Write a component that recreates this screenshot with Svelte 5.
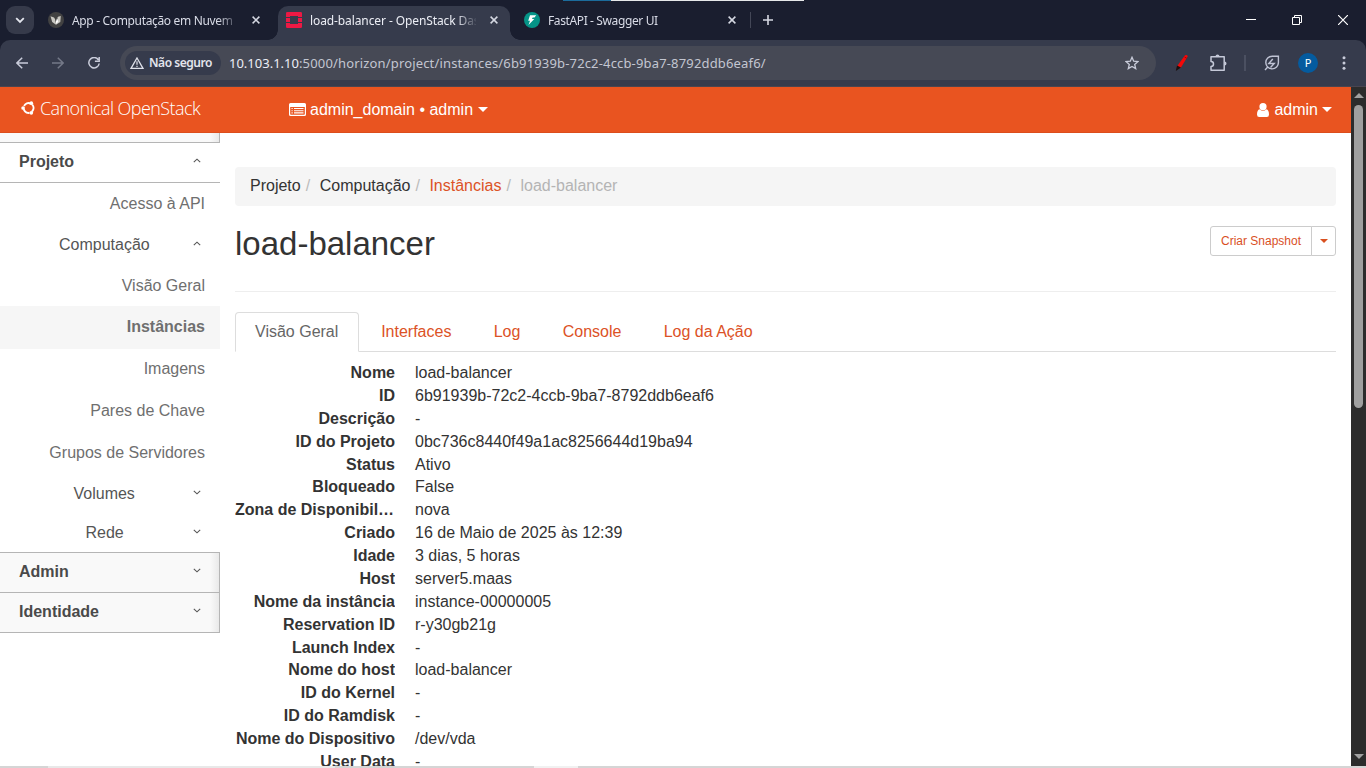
<script>
  const details = [
    ['Nome', 'load-balancer'],
    ['ID', '6b91939b-72c2-4ccb-9ba7-8792ddb6eaf6'],
    ['Descrição', '-'],
    ['ID do Projeto', '0bc736c8440f49a1ac8256644d19ba94'],
    ['Status', 'Ativo'],
    ['Bloqueado', 'False'],
    ['Zona de Disponibilidade', 'nova'],
    ['Criado', '16 de Maio de 2025 às 12:39'],
    ['Idade', '3 dias, 5 horas'],
    ['Host', 'server5.maas'],
    ['Nome da instância', 'instance-00000005'],
    ['Reservation ID', 'r-y30gb21g'],
    ['Launch Index', '-'],
    ['Nome do host', 'load-balancer'],
    ['ID do Kernel', '-'],
    ['ID do Ramdisk', '-'],
    ['Nome do Dispositivo', '/dev/vda'],
    ['User Data', '-']
  ];
  const tabs = ['Visão Geral', 'Interfaces', 'Log', 'Console', 'Log da Ação'];
</script>

{#snippet chevron(up)}
  <svg class="chev" width="8" height="5" viewBox="0 0 8 5"><path d={up ? 'M.8 4.2 4 1.2l3.2 3' : 'M.8.8 4 3.8l3.2-3'} fill="none" stroke="#555" stroke-width="1.1" /></svg>
{/snippet}

{#snippet close()}
  <svg class="close" width="8" height="8" viewBox="0 0 8 8"><path d="m.6.6 6.8 6.8M7.4.6.6 7.4" stroke="#d5d8e2" stroke-width="1.5" /></svg>
{/snippet}

<div class="screen">
  <div class="strip">
    <div class="search"><svg width="10" height="7" viewBox="0 0 10 7"><path d="m1.2 1.2 3.8 3.8 3.8-3.8" fill="none" stroke="#e4e6ee" stroke-width="1.8" /></svg></div>
    <div class="tab first">
      <svg width="16" height="16" viewBox="0 0 16 16"><circle cx="8" cy="8" r="8" fill="#424242" /><path d="M2.5 4.2 6 5.4 8 8l2-3.2 2.8-.8-.5 6L8 12.7 4.2 10Z" fill="#c9c8c2" /><path d="m6.6 5.6 1.5 5.8L10 5.6 8.1 8Z" fill="#333" /><path d="m8 9 1.3-2.4 1 3.2L8 12Z" fill="#fff" /></svg>
      <span class="tabtext t1">App - Computação em Nuvem</span>{@render close()}
    </div>
    <div class="tab active">
      <svg width="16" height="16" viewBox="0 0 16 16"><path d="M1.3 0h13.4Q16 0 16 1.3V5h-4V4H4v1H0V1.300Q0 0 1.300 0ZM0 6h4v4H0ZM12 6h4v4h-4ZM0 11h4v1h8v-1h4v3.700q0 1.300-1.300 1.300H1.300Q0 16 0 14.700Z" fill="#ed1944" /></svg>
      <span class="tabtext t2">load-balancer - OpenStack Dashboard</span>{@render close()}
    </div>
    <div class="tab third">
      <svg width="16" height="16" viewBox="0 0 16 16"><circle cx="8" cy="8" r="8" fill="#059487" /><path d="M6 3.200h6.200L10.500 5.500H8.700L8 7h2.300L4.500 13 6 8.800H4.200Z" fill="#fff" /></svg>
      <span class="tabtext t3">FastAPI - Swagger UI</span>{@render close()}
    </div>
    <i class="tabsep"></i>
    <svg class="plus" width="10" height="10" viewBox="0 0 10 10"><path d="M5 0v10M0 5h10" stroke="#d5d8e2" stroke-width="1.600" /></svg>
    <div class="window">
      <svg width="10" height="10" viewBox="0 0 10 10"><path d="M0 4.500h10" stroke="#fff" /></svg>
      <svg width="10" height="10" viewBox="0 0 10 10" fill="none" stroke="#fff"><path d="M.5 2.500h7v7h-7zM2.500 2.500v-2h7v7h-2" /></svg>
      <svg width="10" height="10" viewBox="0 0 10 10"><path d="m0 0 10 10M10 0 0 10" stroke="#fff" stroke-width="1.200" /></svg>
    </div>
    <div class="topline"></div>
  </div>

  <div class="toolbar">
    <div class="navicons">
      <svg width="12" height="12" viewBox="0 0 12 12" fill="none" stroke="#c9ccda" stroke-width="1.500"><path d="M12 6H1M6.200.700.900 6l5.300 5.300" /></svg>
      <svg width="12" height="12" viewBox="0 0 12 12" fill="none" stroke="#747988" stroke-width="1.500"><path d="M0 6h11M5.800.700 11.100 6l-5.300 5.300" /></svg>
      <svg width="12" height="12" viewBox="0 0 12 12" fill="none" stroke="#c9ccda" stroke-width="1.500"><path d="M10.300 2.700A5.200 5.200 0 1 0 11.200 6.500M11.200 0v4.300H6.900" /></svg>
    </div>
    <div class="omnibox">
      <div class="chip">
        <svg width="14" height="12" viewBox="0 0 14 12"><path d="M7 1 13 11.300H1Z" fill="none" stroke="#dfe1ea" stroke-width="1.300" /><path d="M7 4.300v3.500M7 8.700v1.300" stroke="#dfe1ea" stroke-width="1.200" /></svg>
        <b>Não seguro</b>
      </div>
      <span class="url"><em>10.103.1.10</em>:5000/horizon/project/instances/6b91939b-72c2-4ccb-9ba7-8792ddb6eaf6/</span>
      <svg class="star" width="14" height="14" viewBox="0 0 14 14"><path d="m7 1.300 1.700 3.900 4.200.400-3.200 2.800 1 4.200L7 10.400l-3.700 2.200 1-4.200L1.100 5.600l4.200-.400Z" fill="none" stroke="#c9ccda" stroke-width="1.300" /></svg>
    </div>
    <div class="exts">
      <svg width="14" height="18" viewBox="0 0 14 18"><path d="M10 1.200q2-.8 2.800 1L5.500 14.300 1.500 13Z" fill="#f40808" /><path d="m9.600 3 2.200 1.300" stroke="#a80000" /><path d="m2 11.500 4 2L.800 17Z" fill="#1c1010" /></svg>
      <svg width="18" height="18" viewBox="0 0 18 18"><path d="M2 2.800h13.200v13.400H2v-3.800a2.400 2.400 0 0 0 0-5Z" fill="none" stroke="#c5c9d8" stroke-width="1.500" stroke-linejoin="round" /><path d="M6.500 2.500a2 2 0 0 1 4 0ZM15.500 7.500a2 2 0 0 1 0 4Z" fill="#c5c9d8" /></svg>
      <i></i>
      <svg width="16" height="16" viewBox="0 0 16 16" fill="none" stroke="#bfc3d4" stroke-width="1.400"><path d="M14.400 1.300v6.200a6.300 6.300 0 1 1-6.200-6.200ZM3.300 12.500 1 15" /><path d="m8.800 4-4 4.500h5.400l-3.700 4" /></svg>
      <span class="avatar">P</span>
      <svg class="dots" width="4" height="14" viewBox="0 0 4 14" fill="#c9ccda"><circle cx="2" cy="1.700" r="1.500" /><circle cx="2" cy="7" r="1.500" /><circle cx="2" cy="12.300" r="1.500" /></svg>
    </div>
  </div>

  <div class="viewport">
    <div class="page">
      <header>
        <div class="brand">
          <svg width="14" height="14" viewBox="0 0 14 14"><circle cx="7.600" cy="7" r="4.900" fill="none" stroke="#fff" stroke-width="2" stroke-dasharray="7.260 3" transform="rotate(-42.500 7.600 7)" /><g fill="#fff"><circle cx="2.100" cy="7" r="1.850" /><circle cx="10.300" cy="2.200" r="1.850" /><circle cx="10.300" cy="11.800" r="1.850" /></g></svg>
          <span>Canonical OpenStack</span>
        </div>
        <div class="domain">
          <svg width="17" height="14" viewBox="0 0 17 14"><path fill-rule="evenodd" d="M1.500 0h14Q17 0 17 1.500v10q0 1.500-1.500 1.500h-14Q0 13 0 11.500v-10Q0 0 1.500 0ZM1.200 4v7q0 .8.700.8h13.200q.7 0 .7-.8V4Z" fill="#fff" /><path d="M2.500 5.500h1.200M2.500 7.700h1.200M2.500 9.900h1.200M5 5.500h9.500M5 7.700h9.500M5 9.900h9.500" stroke="#fff" stroke-width="1.100" /></svg>
          <span>admin_domain • admin</span><i class="caret"></i>
        </div>
        <div class="user">
          <svg width="12" height="14" viewBox="0 0 12 14" fill="#fff"><circle cx="6" cy="3.700" r="3.600" /><path d="M2.600 6.300Q6 9.300 9.400 6.300 12 7 12 11.500 12 14 9.800 14H2.200Q0 14 0 11.500 0 7 2.600 6.300Z" /></svg>
          <span>admin</span><i class="caret"></i>
        </div>
      </header>

      <div class="body">
        <nav>
          <div class="stub"></div>
          <div class="head open"><b>Projeto</b>{@render chevron(true)}</div>
          <div class="leaf h41">Acesso à API</div>
          <div class="group h41"><span class="g1">Computação</span>{@render chevron(true)}</div>
          <div class="leaf h41">Visão Geral</div>
          <div class="leaf selected">Instâncias</div>
          <div class="leaf h41 images">Imagens</div>
          <div class="leaf h42">Pares de Chave</div>
          <div class="leaf h42">Grupos de Servidores</div>
          <div class="group h40"><span class="g2">Volumes</span>{@render chevron(false)}</div>
          <div class="group h38"><span class="g3">Rede</span>{@render chevron(false)}</div>
          <div class="head"><b>Admin</b>{@render chevron(false)}</div>
          <div class="head last"><b>Identidade</b>{@render chevron(false)}</div>
        </nav>

        <main>
          <div class="crumbs"><span>Projeto</span><s>/</s><span>Computação</span><s>/</s><a href="#instances">Instâncias</a><s>/</s><span class="dim">load-balancer</span></div>
          <div class="titlebar">
            <h1>load-balancer</h1>
            <div class="actions"><button>Criar Snapshot</button><button class="drop" aria-label="Mais ações"><i class="caret"></i></button></div>
          </div>
          <div class="tabs">
            {#each tabs as tab, i}<div class:current={i === 0}>{tab}</div>{/each}
          </div>
          <dl>
            {#each details as [term, value]}<dt>{term}</dt><dd>{value}</dd>{/each}
          </dl>
        </main>
      </div>
    </div>
    <div class="scroll"><i class="up"></i><div class="thumb"></div><i class="down"></i></div>
  </div>
  <div class="bottomline"></div>
</div>

<style>
  :global(body) { margin: 0; overflow: hidden; }
  * { box-sizing: border-box; }
  svg { display: block; flex: none; }
  .screen { width: 1366px; height: 768px; position: relative; overflow: hidden; display: flex; flex-direction: column; background: #fff; font: 16px/1.42857 "Liberation Sans", Arial, sans-serif; color: #333; }
  .strip { height: 40px; flex: none; background: #1a1e2f; display: flex; align-items: center; position: relative; font: 12px/16px "Noto Sans", "Open Sans", sans-serif; color: #d9dce7; }
  .search { width: 28px; height: 28px; border-radius: 9px; background: #363a4a; margin-left: 6px; display: grid; place-items: center; }
  .tab { display: flex; align-items: center; height: 34px; margin-top: 6px; padding-bottom: 6px; }
  .first { width: 244px; padding-left: 14px; }
  .active { width: 232px; background: #363b4c; border-radius: 10px 10px 0 0; padding-left: 8px; position: relative; color: #eceef5; }
  .active::before, .active::after { content: ""; position: absolute; bottom: 0; width: 10px; height: 10px; }
  .active::before { left: -10px; background: radial-gradient(circle at 0 0, transparent 9.5px, #363b4c 10px); }
  .active::after { right: -10px; background: radial-gradient(circle at 100% 0, transparent 9.5px, #363b4c 10px); }
  .third { width: 240px; padding-left: 14px; }
  .tabtext { width: 166px; padding-top: 1px; margin: 0 14px 0 8px; overflow: hidden; white-space: nowrap; -webkit-mask: linear-gradient(90deg, #000 146px, transparent 168px); mask: linear-gradient(90deg, #000 146px, transparent 168px); }
  .t1 { letter-spacing: -.34px; }
  .t2 { letter-spacing: -.1px; }
  .t3 { letter-spacing: -.38px; }
  .tabsep { width: 1px; height: 16px; background: #434757; }
  .plus { margin-left: 12px; }
  .window { margin-left: auto; margin-right: 18px; display: flex; gap: 36px; }
  .topline { position: absolute; left: 563px; top: 0; width: 241px; height: 1px; background: linear-gradient(90deg, #1b6b9b 48px, #e6e8e9 48px); }
  .toolbar { height: 47px; flex: none; background: linear-gradient(#1a1e2f, #1a1e2f) top / 100% 12px no-repeat, #363b4c; display: flex; align-items: center; position: relative; z-index: 0; font-family: "Noto Sans", "Open Sans", sans-serif; border-bottom: 1px solid #494550; }
  .toolbar::before { content: ""; position: absolute; inset: 0; z-index: -1; border-radius: 10px 10px 0 0; background: #363b4c; }
  .navicons { display: flex; gap: 24px; padding-left: 16px; width: 120px; }
  .omnibox { width: 1036px; height: 34px; border-radius: 17px; background: #464955; display: flex; align-items: center; padding-left: 5px; }
  .chip { width: 96px; height: 24px; border-radius: 12px; background: #363b4c; display: flex; align-items: center; padding-left: 5px; gap: 5px; color: #e3e5ed; font-size: 12px; white-space: nowrap; }
  .chip b { font-weight: 600; letter-spacing: -.45px; }
  .url { margin-left: 8px; font-size: 13px; line-height: 20px; color: #c3c6d1; letter-spacing: .16px; white-space: nowrap; }
  .url em { font-style: normal; color: #eceef5; letter-spacing: 0; }
  .star { margin-left: auto; margin-right: 17px; }
  .exts { flex: 1; display: flex; align-items: center; padding-left: 19px; }
  .exts svg:nth-child(2) { margin-left: 20px; }
  .exts i { width: 2px; height: 16px; background: #4b5061; margin: 0 18px 0 17px; }
  .avatar { margin-left: 18px; width: 20px; height: 20px; border-radius: 50%; background: #045b9f; color: #fff; font-size: 11px; line-height: 20px; text-align: center; }
  .dots { margin-left: 24px; }
  .viewport { display: flex; height: 681px; }
  .page { width: 1351px; overflow: hidden; }
  header { height: 46px; background: #e95420; color: #fff; display: flex; align-items: center; border-bottom: 1px solid #dc4d1c; }
  header > div { display: flex; align-items: center; white-space: nowrap; }
  .brand { padding-left: 21px; width: 289px; gap: 5px; font: 300 18px/24px "Open Sans", Lato, sans-serif; letter-spacing: -.58px; padding-bottom: 3px; }
  .brand span { margin-top: -1px; }
  .domain span { margin: 1px 5px 0 4px; padding-top: 1px; }
  .user { margin-left: auto; margin-right: 19px; }
  .user span { margin: 1px 4px 0 5px; padding-top: 1px; }
  .caret { display: block; border: 5px solid transparent; border-top-color: currentColor; border-bottom: 0; }
  .body { display: flex; height: 635px; }
  nav { width: 220px; flex: none; line-height: 22px; color: #6f6f6f; }
  nav > div { display: flex; align-items: center; padding-right: 15px; }
  .stub, .head { border: solid #b5b5b5; border-width: 0 1px 0 0; background: linear-gradient(90deg, transparent 210px, #e9e9e9 219px), #f9f9f9; }
  .stub { height: 9px; }
  .head { height: 40px; padding-left: 19px; padding-bottom: 2px; border-top-width: 1px; justify-content: space-between; color: #4a4a4a; }
  .head.last { height: 41px; border-bottom-width: 1px; }
  .head.open { height: 41px; border-right: 0; border-bottom-width: 1px; background: #fff; }
  .head .chev, .group .chev { margin-right: 4px; margin-bottom: 3px; }
  .head:not(.open) .chev { margin-right: 3px; }
  .leaf { justify-content: flex-end; }
  .h38 { height: 38px; }
  .h40 { height: 40px; }
  .h41 { height: 41px; }
  .h42 { height: 42px; }
  .images { padding-bottom: 2px; }
  .selected { height: 43px; background: #f6f6f6; font-weight: bold; padding-bottom: 2px; }
  .group { color: #555; justify-content: space-between; }
  .g1 { margin-left: 59px; }
  .g2 { margin-left: 73.500px; }
  .g3 { margin-left: 85.500px; }
  main { width: 1101px; margin: 34px 15px 0; }
  .crumbs { height: 39px; border-radius: 4px; background: #f5f5f5; padding: 0 15px; display: flex; align-items: center; }
  .crumbs s { text-decoration: none; color: #bbb; width: 19px; padding-left: 5px; }
  .crumbs a { color: #dc5226; text-decoration: none; }
  .dim { color: #b4b4b4; }
  .titlebar { height: 86px; display: flex; justify-content: space-between; border-bottom: 1px solid #eee; }
  h1 { margin: 19px 0 0; font-weight: normal; font-size: 33px; line-height: 38px; }
  .actions { display: flex; margin-top: 20px; height: 30px; }
  button { border: 1px solid #ccc; border-radius: 3px 0 0 3px; background: #fff; color: #d9501f; padding: 0; width: 102px; font: 12px/18px "Liberation Sans", Arial, sans-serif; }
  .drop { width: 25px; margin-left: -1px; border-radius: 0 3px 3px 0; display: grid; place-items: center; }
  .drop .caret { border-width: 4px 4px 0; }
  .tabs { display: flex; height: 40px; margin-top: 20px; box-shadow: inset 0 -1px #ddd; color: #dc5226; }
  .tabs div { padding: 7px 19.150px; margin-right: 2px; border: 1px solid transparent; line-height: 23px; white-space: nowrap; }
  .tabs .current { border-color: #ddd #ddd transparent; border-radius: 4px 4px 0 0; background: #fff; color: #666; padding: 7px 19px; width: 124px; }
  dl { margin: 10px 0 0; display: grid; grid-template-columns: 160px 1fr; column-gap: 20px; }
  dt, dd { margin: 0; line-height: 22.87px; white-space: nowrap; }
  dt { font-weight: bold; text-align: right; overflow: hidden; text-overflow: ellipsis; }
  .scroll { width: 15px; background: #2c2c2c; display: flex; flex-direction: column; align-items: center; padding: 6px 0 9px; }
  .scroll i { border: 5px solid transparent; }
  .up { border-top: 0 !important; border-bottom-color: #a0a0a0 !important; }
  .down { margin-top: auto; border-bottom: 0 !important; border-top-color: #a0a0a0 !important; }
  .thumb { width: 9px; height: 303px; margin-top: 7px; border-radius: 5px; background: #9f9f9f; }
  .bottomline { position: absolute; left: 0; right: 0; bottom: 0; height: 2px; background: linear-gradient(90deg, #d5d5d5 48px, #e8e8e8 48px 335px, #d5d5d5 335px 534px, #f1f1f1 534px 578px, #d5d5d5 578px); }
</style>
